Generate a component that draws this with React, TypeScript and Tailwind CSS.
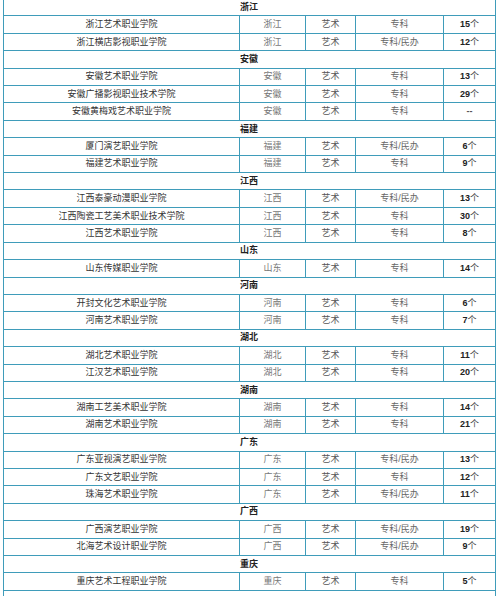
import React from "react";

type School = { name: string; prov: string; level: string; count: string };
type Group = { prov: string; schools: School[] };

const groups: Group[] = [
  {
    prov: "浙江",
    schools: [
      { name: "浙江艺术职业学院", prov: "浙江", level: "专科", count: "15" },
      { name: "浙江横店影视职业学院", prov: "浙江", level: "专科/民办", count: "12" },
    ],
  },
  {
    prov: "安徽",
    schools: [
      { name: "安徽艺术职业学院", prov: "安徽", level: "专科", count: "13" },
      { name: "安徽广播影视职业技术学院", prov: "安徽", level: "专科", count: "29" },
      { name: "安徽黄梅戏艺术职业学院", prov: "安徽", level: "专科", count: "" },
    ],
  },
  {
    prov: "福建",
    schools: [
      { name: "厦门演艺职业学院", prov: "福建", level: "专科/民办", count: "6" },
      { name: "福建艺术职业学院", prov: "福建", level: "专科", count: "9" },
    ],
  },
  {
    prov: "江西",
    schools: [
      { name: "江西泰豪动漫职业学院", prov: "江西", level: "专科/民办", count: "13" },
      { name: "江西陶瓷工艺美术职业技术学院", prov: "江西", level: "专科", count: "30" },
      { name: "江西艺术职业学院", prov: "江西", level: "专科", count: "8" },
    ],
  },
  {
    prov: "山东",
    schools: [{ name: "山东传媒职业学院", prov: "山东", level: "专科", count: "14" }],
  },
  {
    prov: "河南",
    schools: [
      { name: "开封文化艺术职业学院", prov: "河南", level: "专科", count: "6" },
      { name: "河南艺术职业学院", prov: "河南", level: "专科", count: "7" },
    ],
  },
  {
    prov: "湖北",
    schools: [
      { name: "湖北艺术职业学院", prov: "湖北", level: "专科", count: "11" },
      { name: "江汉艺术职业学院", prov: "湖北", level: "专科", count: "20" },
    ],
  },
  {
    prov: "湖南",
    schools: [
      { name: "湖南工艺美术职业学院", prov: "湖南", level: "专科", count: "14" },
      { name: "湖南艺术职业学院", prov: "湖南", level: "专科", count: "21" },
    ],
  },
  {
    prov: "广东",
    schools: [
      { name: "广东亚视演艺职业学院", prov: "广东", level: "专科/民办", count: "13" },
      { name: "广东文艺职业学院", prov: "广东", level: "专科", count: "12" },
      { name: "珠海艺术职业学院", prov: "广东", level: "专科/民办", count: "11" },
    ],
  },
  {
    prov: "广西",
    schools: [
      { name: "广西演艺职业学院", prov: "广西", level: "专科/民办", count: "19" },
      { name: "北海艺术设计职业学院", prov: "广西", level: "专科/民办", count: "9" },
    ],
  },
  {
    prov: "重庆",
    schools: [{ name: "重庆艺术工程职业学院", prov: "重庆", level: "专科", count: "5" }],
  },
];

const font = { fontFamily: '"Liberation Sans", "Noto Sans CJK SC", sans-serif' };

function ProvinceRow({ prov }: { prov: string }) {
  return (
    <div className="flex h-[17.42px] items-center border-b border-[#3f9cba] pl-[236px] text-[9px] font-bold leading-none text-[#222]">
      {prov}
    </div>
  );
}

function SchoolRow({ s }: { s: School }) {
  return (
    <div className="grid h-[17.42px] grid-cols-[236px_66px_50px_88px_51px] border-b border-[#3f9cba] text-[9px] leading-none">
      <div className="flex items-center justify-center border-r border-[#3f9cba] text-[#333]">{s.name}</div>
      <div className="flex items-center justify-center border-r border-[#3f9cba] text-[#777]">{s.prov}</div>
      <div className="flex items-center justify-center border-r border-[#3f9cba] text-[#555]">艺术</div>
      <div className="flex items-center justify-center border-r border-[#3f9cba] text-[#666]">{s.level}</div>
      <div className="flex items-center justify-center">
        {s.count ? (
          <>
            <span className="font-bold text-[#222]">{s.count}</span>
            <span className="text-[#444]">个</span>
          </>
        ) : (
          <span className="font-bold text-[#555]">--</span>
        )}
      </div>
    </div>
  );
}

export default function App() {
  return (
    <div className="h-[596px] w-[499px] overflow-hidden bg-white" style={font}>
      <div className="-mt-px ml-[3px] w-[493px] border-x border-[#3f9cba]">
        {groups.map((g) => (
          <React.Fragment key={g.prov}>
            <ProvinceRow prov={g.prov} />
            {g.schools.map((s) => (
              <SchoolRow key={s.name} s={s} />
            ))}
          </React.Fragment>
        ))}
        <div className="h-[17.42px]" />
      </div>
    </div>
  );
}
